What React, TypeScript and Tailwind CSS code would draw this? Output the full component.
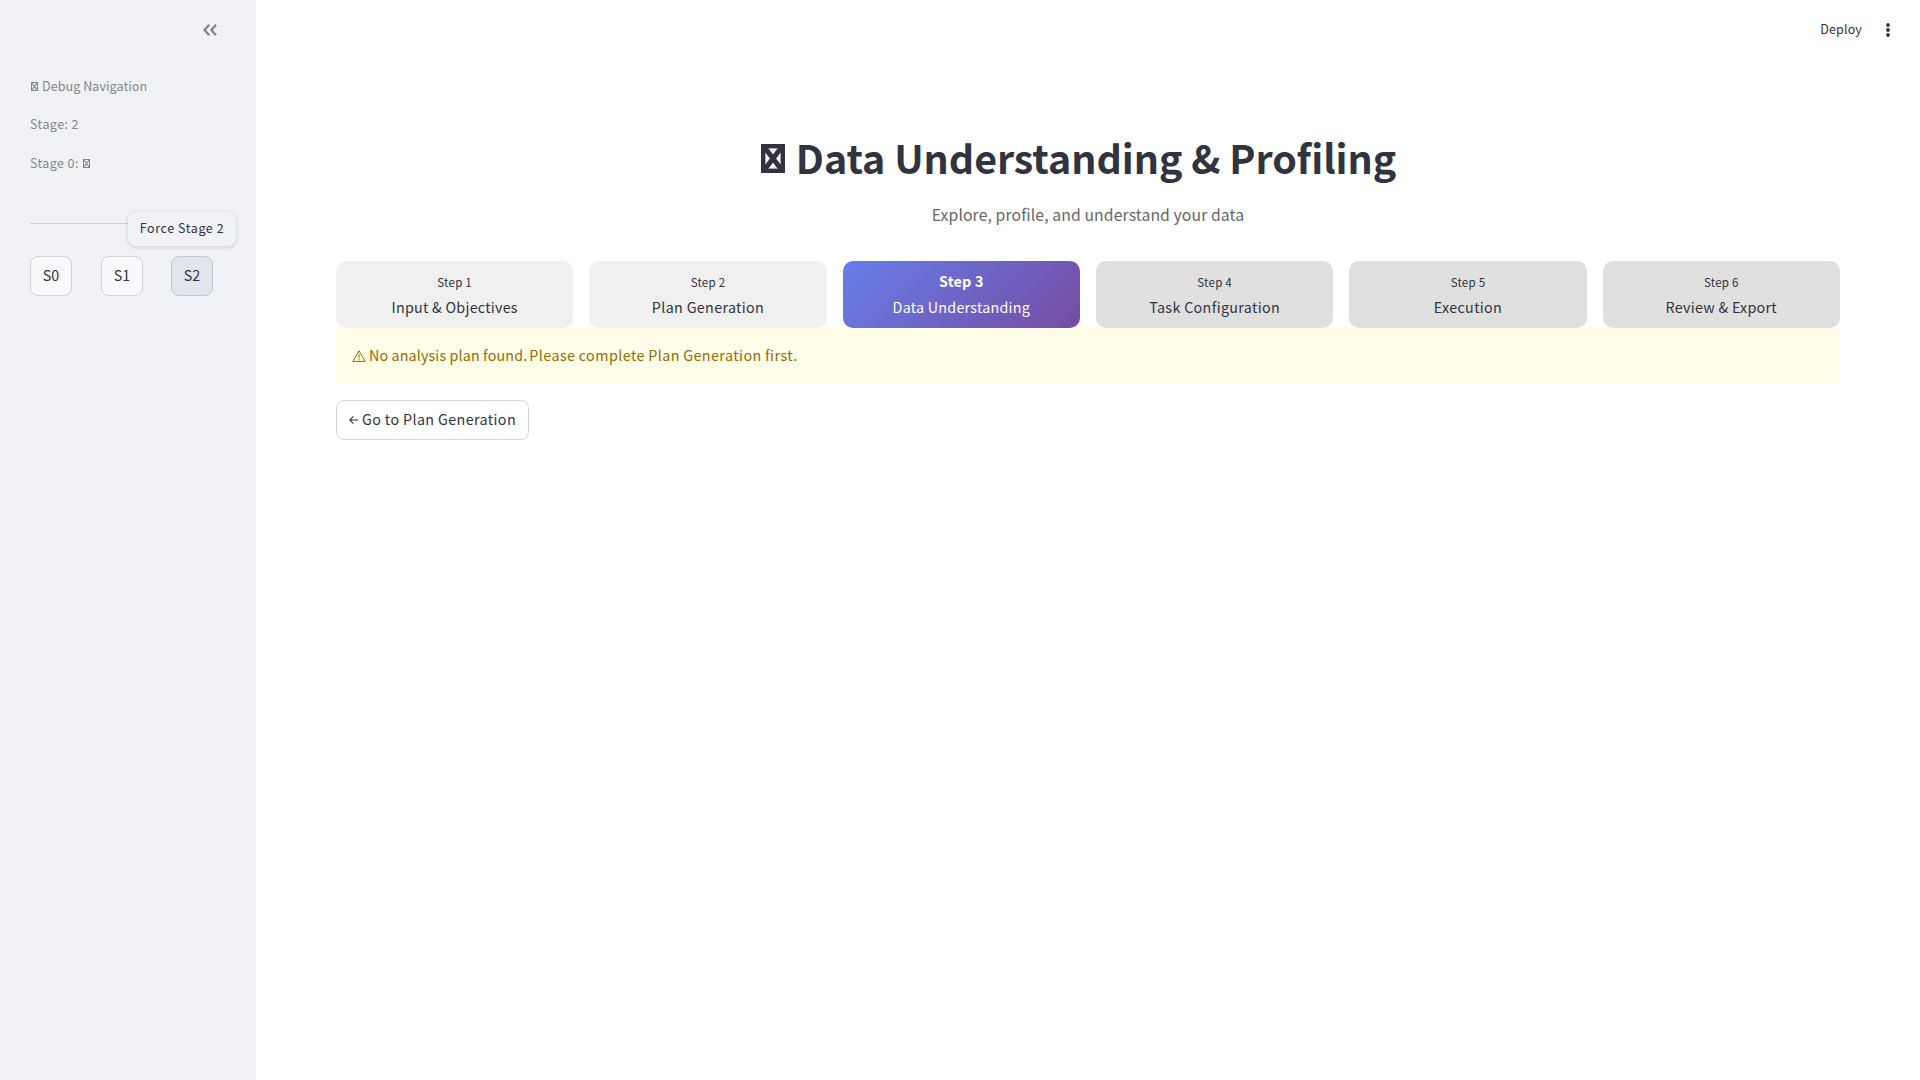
type TofuProps = { className: string; stroke?: number; cross?: number };

/** Box with a diagonal cross: the missing-glyph mark. */
function MissingGlyph({ className, stroke = 1, cross = stroke }: TofuProps) {
  return (
    <svg className={className} viewBox="0 0 24 29" preserveAspectRatio="none" fill="none" stroke="currentColor" strokeWidth={stroke} aria-hidden="true">
      <rect x={stroke / 2} y={stroke / 2} width={24 - stroke} height={29 - stroke} />
      <path strokeWidth={cross} d={`M${stroke} ${stroke} L${24 - stroke} ${29 - stroke} M${24 - stroke} ${stroke} L${stroke} ${29 - stroke}`} />
    </svg>
  );
}

const steps = [
  { label: "Input & Objectives", state: "done", tracking: "tracking-[0.24px]" },
  { label: "Plan Generation", state: "done", tracking: "tracking-[0.33px]" },
  { label: "Data Understanding", state: "current", tracking: "tracking-[0.24px]" },
  { label: "Task Configuration", state: "todo", tracking: "tracking-[0.33px]" },
  { label: "Execution", state: "todo", tracking: "tracking-[0.32px]" },
  { label: "Review & Export", state: "todo", tracking: "tracking-[0.26px]" },
];

const cardStyles: Record<string, string> = {
  done: "bg-[#f0f0f0]",
  current: "bg-[linear-gradient(135deg,#667eea_0%,#764ba2_100%)] text-white",
  todo: "bg-[#e0e0e0]",
};

function Sidebar() {
  return (
    <aside className="flex w-64 shrink-0 flex-col bg-[#f0f2f6] px-[30px]">
      <div className="flex h-[60px] items-center justify-end pr-[9px]">
        <svg className="h-3 w-3.5 text-[#808495]" viewBox="0 0 14 12" fill="none" stroke="currentColor" strokeWidth="2.3" aria-hidden="true">
          <path d="M6.2 0.8 L1.6 6 L6.2 11.2 M13 0.8 L8.4 6 L13 11.2" />
        </svg>
      </div>
      <div className="mt-[15px] flex flex-col gap-4 text-[12.53px] leading-[22.4px] text-[#83868f]">
        <p className="flex items-center gap-1">
          <MissingGlyph className="ml-[1px] h-[9px] w-[7px]" stroke={3.4} />
          <span className="tracking-[0.08px]">Debug Navigation</span>
        </p>
        <p className="tracking-[0.42px]">Stage: 2</p>
        <p className="flex items-center gap-1">
          <span className="tracking-[0.4px]">Stage 0:</span>
          <MissingGlyph className="h-[9px] w-[7px]" stroke={3.4} />
        </p>
      </div>
      <hr className="mt-[49px] border-t border-[#cccfd5]" />
      <div className="relative mt-8 flex gap-7 text-[14.32px]">
        <button className="h-10 w-[42px] rounded-lg border border-[#d0d2d7] bg-[#f9f9fb] pb-0.5">S0</button>
        <button className="ml-[1px] h-10 w-[42px] rounded-lg border border-[#d0d2d7] bg-[#f9f9fb] pb-0.5">S1</button>
        <button className="h-10 w-[42px] rounded-lg border border-[#c1c5ce] bg-[#e1e6ed] pb-0.5">S2</button>
        <div className="absolute -top-11 left-[98px] flex h-[34px] w-[108px] items-center justify-center whitespace-nowrap rounded-lg bg-[#f0f2f6] pb-0.5 text-[12.53px] tracking-[0.58px] shadow-[0_1px_4px_rgba(0,0,0,0.16)]">
          Force Stage 2
        </div>
      </div>
    </aside>
  );
}

export default function App() {
  return (
    <div className="flex h-screen w-full overflow-hidden bg-white font-['Noto_Sans_CJK_SC',sans-serif] text-[14.32px] leading-[25.6px] text-[#31333f]">
      <Sidebar />
      <main className="flex min-w-0 flex-1 flex-col">
        <header className="flex h-[60px] shrink-0 items-center justify-end gap-6 pr-[30px] text-[12.53px]">
          <span className="pb-0.5 tracking-[0.14px]">Deploy</span>
          <svg className="h-3.5 w-1" viewBox="0 0 4 14" fill="currentColor" aria-hidden="true">
            <circle cx="2" cy="2" r="1.9" />
            <circle cx="2" cy="7" r="1.9" />
            <circle cx="2" cy="12" r="1.9" />
          </svg>
        </header>
        <div className="px-20">
          <h1 className="mt-[70px] flex h-[54px] items-center justify-center gap-[11px] pr-[19px] text-[39.4px] font-bold leading-[54px]">
            <MissingGlyph className="mt-[2px] h-[29px] w-6" stroke={4.4} cross={5} />
            <span className="tracking-[-0.04px]">Data Understanding &amp; Profiling</span>
          </h1>
          <p className="mt-[17px] text-center text-[15.75px] leading-7 tracking-[0.1px] text-[#666666]">Explore, profile, and understand your data</p>
          <div className="mt-8 grid grid-cols-6 gap-4">
            {steps.map((step, i) => (
              <div key={step.label} className={`flex h-[67px] flex-col items-center rounded-[10px] pt-2 ${cardStyles[step.state]}`}>
                {step.state === "current" ? (
                  <strong className="-mt-[1px] leading-[26px] tracking-[0.2px]">Step {i + 1}</strong>
                ) : (
                  <span className="-mb-[1px] text-[11.6px] leading-[26px] tracking-[0.2px]">Step {i + 1}</span>
                )}
                <span className={step.tracking}>{step.label}</span>
              </div>
            ))}
          </div>
          <div className="flex h-14 items-center gap-[3px] rounded-lg bg-[#fffce7] px-4 text-[#926c05]">
            <svg className="-mt-[1px] h-3 w-3.5" viewBox="0 0 14 12" fill="none" stroke="currentColor" strokeWidth="1" aria-hidden="true">
              <path d="M7 0.8 L13.2 11.4 H0.8 Z M7 4 V8.2 M7 9 V10.2" />
            </svg>
            <p className="pb-0.5">
              <span className="tracking-[0.12px]">No analysis plan found.</span>
              <span className="tracking-[0.43px] [word-spacing:-0.3px]">
                <span className="[word-spacing:-1.6px]"> </span>
                Please complete Plan Generation first.
              </span>
            </p>
          </div>
          <button className="mt-4 flex h-10 w-[193px] items-center justify-center gap-1 rounded-lg border border-[#d6d6d9]">
            <svg className="h-2.5 w-[9px]" viewBox="0 0 9 10" fill="none" stroke="currentColor" strokeWidth="1.1" aria-hidden="true">
              <path d="M9 5 H0.8 M4.4 1.4 L0.8 5 L4.4 8.6" />
            </svg>
            <span className="pb-0.5 tracking-[0.38px]">Go to Plan Generation</span>
          </button>
        </div>
      </main>
    </div>
  );
}
